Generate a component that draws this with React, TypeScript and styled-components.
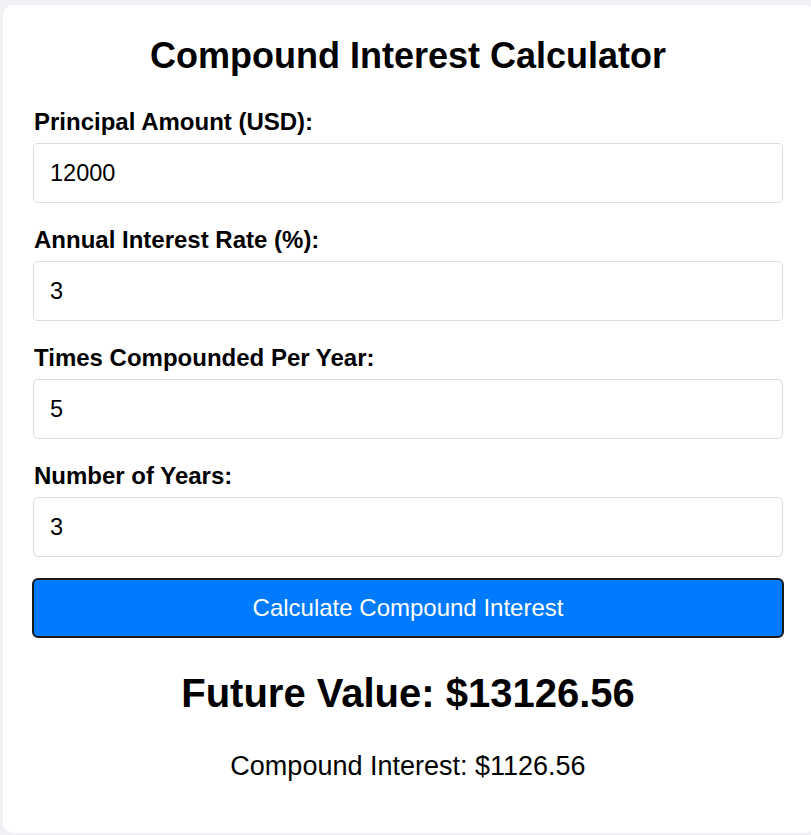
import { useState } from 'react'
import styled, { createGlobalStyle } from 'styled-components'

const GlobalStyle = createGlobalStyle`
    html, body {
        margin: 0;
        padding: 0;
        background-color: #f0f0f5;
        font-family: "Liberation Sans", Arial, sans-serif;
    }
`

export default function App(){
    const [principal, setPrincipal] = useState('12000')
    const [rate, setRate] = useState('3')
    const [times, setTimes] = useState('5')
    const [years, setYears] = useState('3')
    const [result, setResult] = useState({ fv: 13126.56, ci: 1126.56 })

    const calculate = () => {
        const p = parseFloat(principal) || 0
        const r = (parseFloat(rate) || 0) / 100
        const n = parseFloat(times) || 1
        const t = parseFloat(years) || 0
        const fv = p * Math.pow(1 + r / n, n * t)
        setResult({ fv, ci: fv - p })
    }

    return(
        <>
            <GlobalStyle/>
            <Page>
                <Card>
                    <Title>Compound Interest Calculator</Title>

                    <Field>
                        <Label>Principal Amount (USD):</Label>
                        <Input value={principal} onChange={e => setPrincipal(e.target.value)}/>
                    </Field>
                    <Field>
                        <Label>Annual Interest Rate (%):</Label>
                        <Input value={rate} onChange={e => setRate(e.target.value)}/>
                    </Field>
                    <Field>
                        <Label>Times Compounded Per Year:</Label>
                        <Input value={times} onChange={e => setTimes(e.target.value)}/>
                    </Field>
                    <Field $last>
                        <Label>Number of Years:</Label>
                        <Input value={years} onChange={e => setYears(e.target.value)}/>
                    </Field>

                    <Button onClick={calculate}>Calculate Compound Interest</Button>

                    <FutureValue>Future Value: ${result.fv.toFixed(2)}</FutureValue>
                    <Interest>Compound Interest: ${result.ci.toFixed(2)}</Interest>
                </Card>
            </Page>
        </>
    )
}

const Page = styled.div`
    padding: 5px 0 0 3px;
    height: 835px;
    box-sizing: border-box;
    overflow: hidden;
`

const Card = styled.div`
    width: 812px;
    height: 828px;
    box-sizing: border-box;
    background-color: #ffffff;
    border-radius: 10px;
    padding: 20px 29px 0 30px;
`

const Title = styled.h1`
    font-size: 36px;
    font-weight: bold;
    text-align: center;
    color: #000;
    margin: 0 0 23px 0;
    line-height: 62px;
    width: 750px;
`

const Field = styled.div<{ $last?: boolean }>`
    margin-bottom: ${p => p.$last ? '21px' : '25px'};
    width: 750px;
`

const Label = styled.label`
    display: block;
    font-size: 24px;
    font-weight: bold;
    line-height: 23px;
    margin: 0 0 10px 1px;
    color: #000;
`

const Input = styled.input`
    display: block;
    width: 750px;
    height: 60px;
    box-sizing: border-box;
    border: 1px solid #dcdcdc;
    border-radius: 5px;
    padding: 0 16px;
    font-size: 23.5px;
    font-family: "Liberation Sans", Arial, sans-serif;
    color: #000;
    outline: none;
`

const Button = styled.button`
    display: block;
    width: 752px;
    height: 60px;
    margin-left: -1px;
    background-color: #007bff;
    color: #fff;
    border: 2px solid #1a1a1a;
    border-radius: 6px;
    font-size: 24px;
    font-family: "Liberation Sans", Arial, sans-serif;
    cursor: pointer;
`

const FutureValue = styled.h2`
    font-size: 40px;
    font-weight: bold;
    text-align: center;
    margin: 30px 0 0 0;
    line-height: 50px;
    width: 750px;
    color: #000;
`

const Interest = styled.p`
    font-size: 27px;
    text-align: center;
    margin: 33px 0 0 0;
    line-height: 31px;
    width: 750px;
    color: #000;
`
